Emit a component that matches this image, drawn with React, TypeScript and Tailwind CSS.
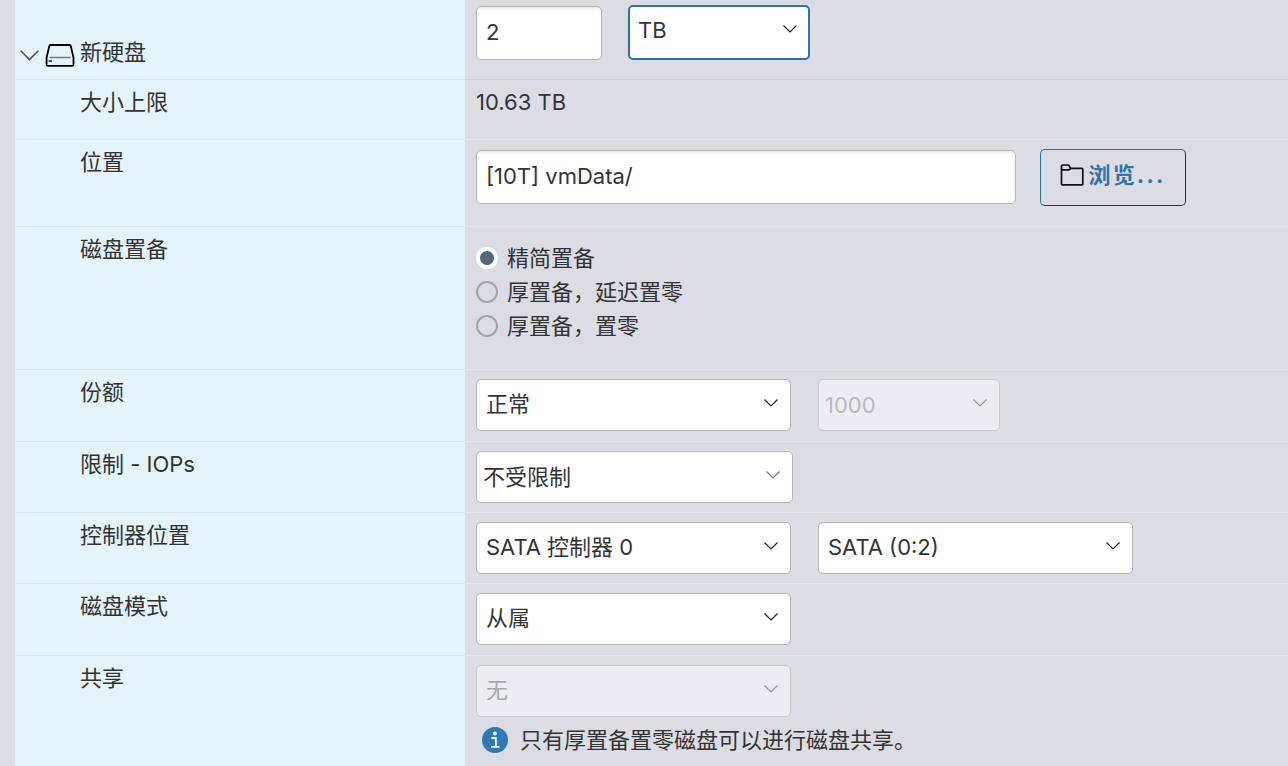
import { useState } from "react";
import type { ReactNode } from "react";

interface RowProps {
  label: string;
  htmlFor?: string;
  className?: string;
  children: ReactNode;
}

function Row({ label, htmlFor, className = "min-h-[71px]", children }: RowProps) {
  return (
    <div className={`flex ${className}`}>
      <div className="w-[450px] shrink-0 border-b border-[#d8e6ee] bg-[#e5f4fb] pt-[9px] pl-[65px]">
        {htmlFor ? <label htmlFor={htmlFor}>{label}</label> : <span>{label}</span>}
      </div>
      <div className="min-w-0 flex-1 border-b border-[#e6e6ea] pt-[9px] pl-[11px]">{children}</div>
    </div>
  );
}

function Chevron({ className = "" }: { className?: string }) {
  return (
    <svg viewBox="0 0 14 8" className={className} fill="none" stroke="currentColor" strokeWidth="1.2">
      <path d="M0.5 0.5 L7 7 L13.5 0.5" />
    </svg>
  );
}

interface SelectProps {
  id: string;
  label?: string;
  options: string[];
  disabled?: boolean;
  // combo fields have tighter side padding and a lighter arrow
  combo?: boolean;
  focused?: boolean;
  className?: string;
}

function Select({ id, label, options, disabled, combo, focused, className = "w-[315px]" }: SelectProps) {
  const [value, setValue] = useState(options[0]);

  const border = focused ? "h-[55px] border-2 border-[#2a73a5]" : disabled ? "border border-[#c9c9ce]" : "border border-[#b6b6ba]";
  const height = focused ? "" : "h-[52px]";
  const fill = disabled ? "bg-[#edecf1]" : "bg-white text-[#333]";
  const text = disabled ? (combo ? "text-[#b9b9be]" : "text-[#a6a6ab]") : "";
  const padding = combo ? "pl-1.5" : focused ? "pb-[5px] pl-2" : "pb-[3px] pl-[9px]";
  const arrow = disabled ? "text-[#96969c]" : combo ? "text-[#77777b]" : "text-[#222]";

  return (
    <div className={`relative ${className}`}>
      <select
        id={id}
        aria-label={label}
        value={value}
        disabled={disabled}
        onChange={(e) => setValue(e.target.value)}
        className={`block w-full appearance-none rounded-[5px] pr-10 opacity-100 outline-none ${border} ${height} ${fill} ${text} ${padding}`}
      >
        {options.map((o) => (
          <option key={o}>{o}</option>
        ))}
      </select>
      <Chevron className={`pointer-events-none absolute top-5 right-[13px] h-2 w-3.5 ${arrow}`} />
    </div>
  );
}

function DiskIcon() {
  return (
    <svg viewBox="0 0 30 24" className="h-6 w-[30px]" fill="none">
      <path
        d="M5.5 2 H24.5 Q25.5 2 25.8 3 L28.5 14.5 V21.2 Q28.5 22.8 27 22.8 H3.2 Q1.6 22.8 1.6 21.2 V14.5 L4.3 3 Q4.5 2 5.5 2 Z"
        stroke="#000"
        strokeWidth="1.8"
      />
      <path d="M4.5 14.5 H25.5" stroke="#777" strokeWidth="1.5" />
      <path d="M3.5 18 H7" stroke="#222" strokeWidth="1.5" />
    </svg>
  );
}

function FolderIcon() {
  return (
    <svg viewBox="0 0 24 22" className="h-[22px] w-6" fill="none" stroke="#111" strokeWidth="1.7">
      <path d="M1.5 20 V2.2 Q1.5 1 2.7 1 H7.8 Q8.8 1 9.3 2 L10.6 4.3 H21.7 Q22.8 4.3 22.8 5.4 V20 Q22.8 20.8 22 20.8 H2.3 Q1.5 20.8 1.5 20 Z" />
      <path d="M1.5 5.8 H8.6 Q9.8 5.8 10.6 4.3" />
    </svg>
  );
}

function InfoIcon() {
  return (
    <svg viewBox="0 0 26 26" className="h-[26px] w-[26px] shrink-0">
      <circle cx="13" cy="13" r="13" fill="#3079b7" />
      <circle cx="12.9" cy="6.5" r="1.9" fill="#fff" />
      <path d="M9.5 11 H13.8 V19.8 M9 19.8 H17.5" fill="none" stroke="#fff" strokeWidth="1.8" />
    </svg>
  );
}

const PROVISIONING = ["精简置备", "厚置备，延迟置零", "厚置备，置零"];

const inputStyle =
  "h-[54px] rounded-[5px] border border-[#b6b6ba] bg-white pb-[3px] pl-[9px] shadow-[inset_0_2px_3px_rgba(0,0,0,0.08)] outline-none";

export default function App() {
  const [expanded, setExpanded] = useState(true);
  const [size, setSize] = useState("2");
  const [location, setLocation] = useState("[10T] vmData/");
  const [provisioning, setProvisioning] = useState(PROVISIONING[0]);

  return (
    <div className="flex min-h-screen flex-col bg-[#dcdce4] pl-[15px] font-[Inter,'Noto_Sans_CJK_SC',sans-serif] text-[22px] leading-[26px] text-[#333]">
      <div className="flex min-h-20">
        <div className="flex w-[450px] shrink-0 items-end border-b border-[#d8e6ee] bg-[#e5f4fb] pb-3 pl-[5px]">
          <button
            type="button"
            aria-label="新硬盘"
            aria-expanded={expanded}
            onClick={() => setExpanded(!expanded)}
            className="flex h-6 w-[25px] items-center"
          >
            <Chevron className="h-[11px] w-[19px] text-[#555]" />
          </button>
          <DiskIcon />
          <label htmlFor="disk-size" className="pb-0.5 pl-[5px]">
            新硬盘
          </label>
        </div>
        <div className="flex flex-1 items-start gap-[26px] border-b border-[#cfcfd5] pt-[5px] pl-[11px]">
          <input
            id="disk-size"
            value={size}
            onChange={(e) => setSize(e.target.value)}
            className={`mt-px w-[126px] ${inputStyle}`}
          />
          <Select id="disk-unit" label="单位" options={["TB", "GB", "MB"]} focused className="w-[182px]" />
        </div>
      </div>

      {expanded && (
        <>
          <Row label="大小上限" className="min-h-[60px]">
            <p>10.63 TB</p>
          </Row>

          <Row label="位置" htmlFor="location" className="min-h-[87px]">
            <div className="flex items-start gap-6">
              <input
                id="location"
                value={location}
                onChange={(e) => setLocation(e.target.value)}
                className={`mt-px w-[540px] ${inputStyle}`}
              />
              <button
                type="button"
                className="flex h-[57px] w-[146px] items-center justify-center gap-1 rounded-[5px] border border-t-[#2a73a5] border-r-[#1b3a50] border-b-[#1b3a50] border-l-[#2a73a5] pb-1.5 font-bold tracking-widest whitespace-nowrap text-[#2f75a5]"
              >
                <FolderIcon />
                浏览...
              </button>
            </div>
          </Row>

          <Row label="磁盘置备" className="min-h-[143px]">
            <div role="radiogroup" aria-label="磁盘置备" className="flex flex-col gap-2 pt-[9px]">
              {PROVISIONING.map((p) => (
                <label key={p} className="flex items-center gap-[9px]">
                  <input
                    type="radio"
                    name="provisioning"
                    checked={provisioning === p}
                    onChange={() => setProvisioning(p)}
                    className="h-[22px] w-[22px] appearance-none rounded-full border-2 border-[#a3a3a8] checked:border-4 checked:border-white checked:bg-[#566773]"
                  />
                  {p}
                </label>
              ))}
            </div>
          </Row>

          <Row label="份额" htmlFor="shares" className="min-h-[72px]">
            <div className="flex gap-[27px]">
              <Select id="shares" options={["正常", "低", "高", "自定义"]} />
              <Select id="shares-value" label="份额值" options={["1000"]} disabled combo className="w-[182px]" />
            </div>
          </Row>

          <Row label="限制 - IOPs" htmlFor="iops">
            <Select id="iops" options={["不受限制"]} combo className="w-[317px]" />
          </Row>

          <Row label="控制器位置" htmlFor="controller">
            <div className="flex gap-[27px]">
              <Select id="controller" options={["SATA 控制器 0", "SCSI 控制器 0"]} />
              <Select id="controller-port" label="控制器端口" options={["SATA (0:2)", "SATA (0:3)"]} />
            </div>
          </Row>

          <Row label="磁盘模式" htmlFor="disk-mode" className="min-h-[72px]">
            <Select id="disk-mode" options={["从属", "独立 - 持久", "独立 - 非持久"]} />
          </Row>

          <Row label="共享" htmlFor="sharing" className="min-h-28 flex-1">
            <Select id="sharing" options={["无"]} disabled />
            <p className="flex items-center gap-3 pt-2.5 pl-1.5">
              <InfoIcon />
              只有厚置备置零磁盘可以进行磁盘共享。
            </p>
          </Row>
        </>
      )}
    </div>
  );
}
